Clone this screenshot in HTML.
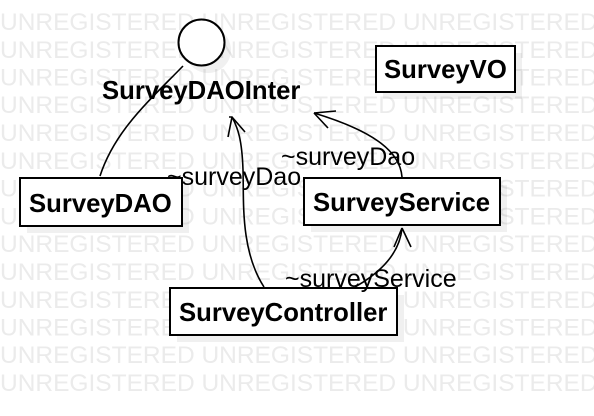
<!DOCTYPE html>
<html><head><style>html,body{margin:0;padding:0;background:#fff;width:594px;height:416px;overflow:hidden}</style></head>
<body>
<svg width="594" height="416" xmlns="http://www.w3.org/2000/svg" font-family="Liberation Sans, sans-serif">
<g fill="#ebebeb" font-size="24.5">
<text x="0" y="30">UNREGISTERED UNREGISTERED UNREGISTERED</text>
<text x="0" y="58">UNREGISTERED UNREGISTERED UNREGISTERED</text>
<text x="0" y="85.5">UNREGISTERED UNREGISTERED UNREGISTERED</text>
<text x="0" y="113">UNREGISTERED UNREGISTERED UNREGISTERED</text>
<text x="0" y="141">UNREGISTERED UNREGISTERED UNREGISTERED</text>
<text x="0" y="169">UNREGISTERED UNREGISTERED UNREGISTERED</text>
<text x="0" y="196.5">UNREGISTERED UNREGISTERED UNREGISTERED</text>
<text x="0" y="224.5">UNREGISTERED UNREGISTERED UNREGISTERED</text>
<text x="0" y="252">UNREGISTERED UNREGISTERED UNREGISTERED</text>
<text x="0" y="280">UNREGISTERED UNREGISTERED UNREGISTERED</text>
<text x="0" y="308">UNREGISTERED UNREGISTERED UNREGISTERED</text>
<text x="0" y="335.5">UNREGISTERED UNREGISTERED UNREGISTERED</text>
<text x="0" y="363">UNREGISTERED UNREGISTERED UNREGISTERED</text>
<text x="0" y="391">UNREGISTERED UNREGISTERED UNREGISTERED</text>
</g>
<g fill="#000" opacity="0.06">
<circle cx="208" cy="50" r="23"/>
<rect x="27" y="185" width="162" height="48"/>
<rect x="383" y="53" width="139" height="46"/>
<rect x="311" y="185" width="196" height="47"/>
<rect x="177" y="295" width="227" height="47"/>
</g>
<g fill="#fff" stroke="#000" stroke-width="2">
<circle cx="201.5" cy="42.5" r="23"/>
<rect x="20" y="178" width="162" height="48"/>
<rect x="376" y="46" width="139" height="46"/>
<rect x="304" y="178" width="196" height="47"/>
<rect x="170" y="288" width="227" height="47"/>
</g>
<g fill="none" stroke="#000" stroke-width="1.6">
<path d="M100 176 C115 130 150 100 183 66"/>
<path d="M264 287 C240 250 244 200 243 170 C242 140 238 128 232 117"/>
<path d="M229 117 L232 117 L245 132 M232 117 L228 137"/>
<path d="M402 177 C400 150 370 130 314 113"/>
<path d="M314 113 L336 111 M314 113 L328 128"/>
<path d="M355 287 C385 270 400 250 402 228"/>
<path d="M402 228 L394 247 M402 228 L411 247"/>
</g>
<g font-weight="bold" font-size="25.7" fill="#000">
<text x="102" y="99">SurveyDAOInter</text>
<text x="29" y="212">SurveyDAO</text>
<text x="384" y="78">SurveyVO</text>
<text x="313" y="211">SurveyService</text>
<text x="179" y="321">SurveyController</text>
</g>
<g font-size="25" fill="#000">
<text x="167" y="185">~surveyDao</text>
<text x="281" y="165">~surveyDao</text>
<text x="285" y="287">~surveyService</text>
</g>
</svg>
</body></html>
